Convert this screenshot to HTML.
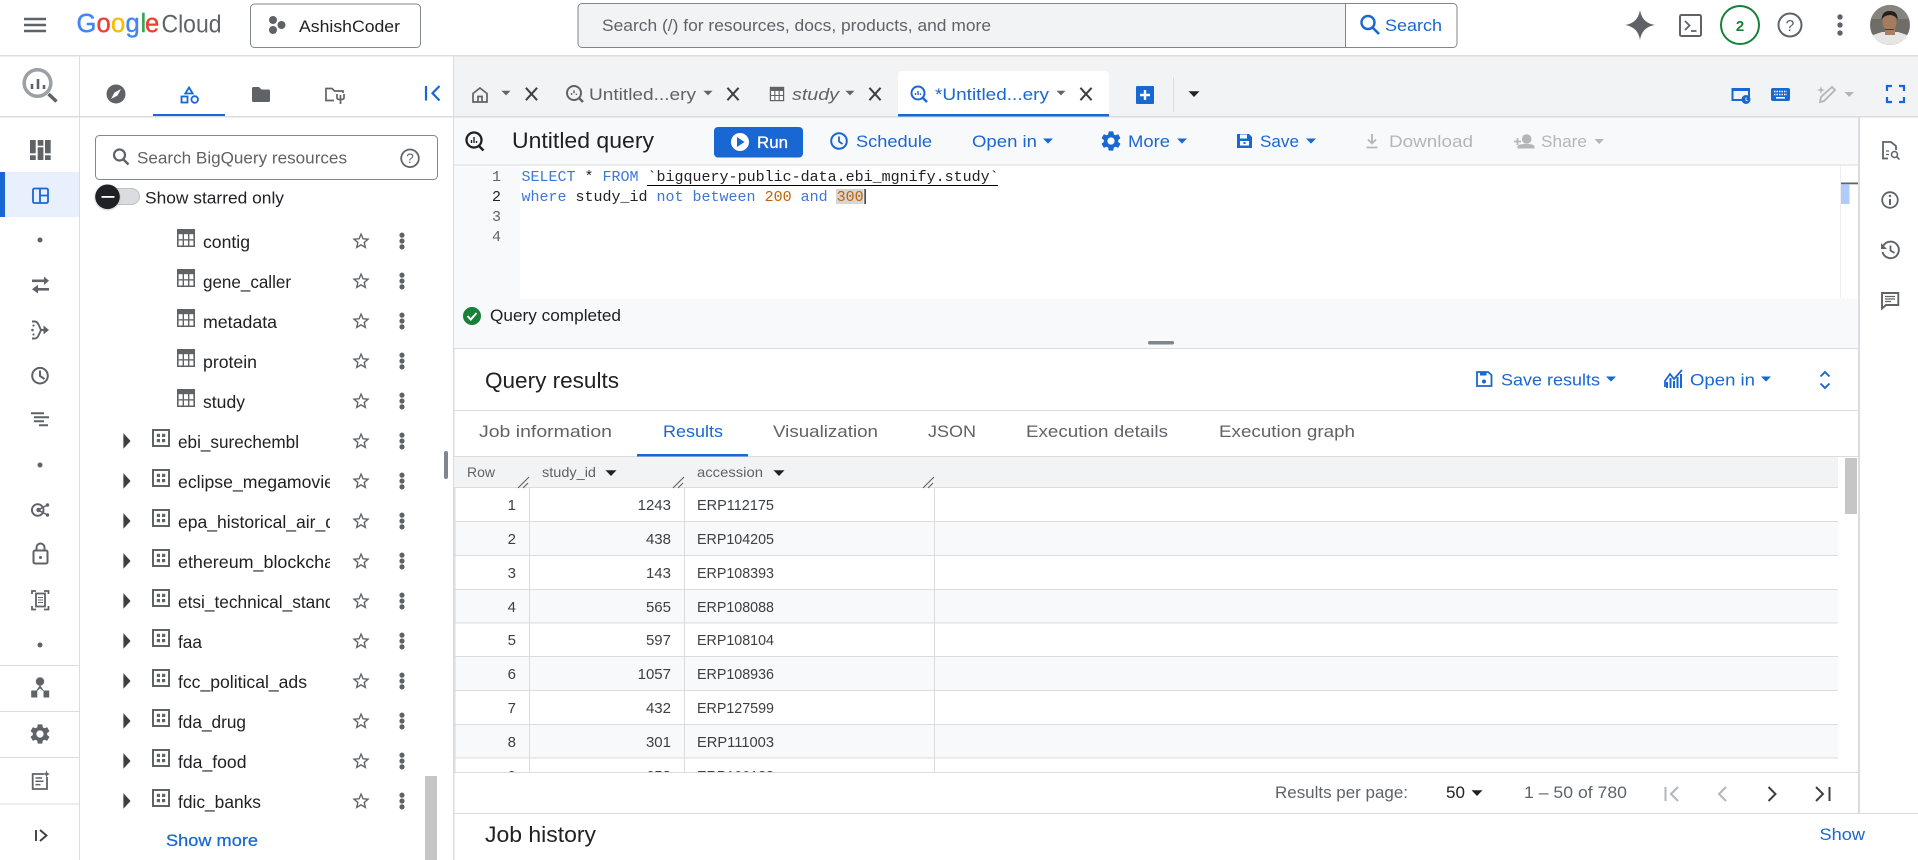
<!DOCTYPE html>
<html lang="en">
<head>
<meta charset="utf-8">
<title>BigQuery</title>
<style>
html,body{margin:0;padding:0;background:#fff;width:1918px;height:860px;overflow:hidden}
svg{display:block}
text{font-family:"Liberation Sans",Arial,sans-serif;font-size:17px;fill:#202124}
.g{fill:#5f6368}.b{fill:#1967d2}.l{fill:#b3b6ba}
.m{font-family:"Liberation Mono",monospace;font-size:15px}
.kw{fill:#3b78d8}.num{fill:#c26401}
.h{font-size:22px}
.tb{font-size:15px;fill:#3c4043}
.t{font-size:17.5px}
.med{font-weight:bold;stroke:none}
</style>
</head>
<body>
<svg xmlns="http://www.w3.org/2000/svg" width="1918" height="860" viewBox="0 0 1918 860">
<defs>
<g id="star" transform="translate(-10.4,-10.4) scale(.87)"><path fill="#5f6368" d="M22 9.24l-7.19-.62L12 2 9.19 8.63 2 9.24l5.46 4.73L5.82 21 12 17.27 18.18 21l-1.63-7.03L22 9.24zM12 15.4l-3.76 2.27 1-4.28-3.32-2.88 4.38-.38L12 6.1l1.71 4.04 4.38.38-3.32 2.88 1 4.28L12 15.4z"/></g>
<g id="dots" fill="#5f6368"><circle cx="0" cy="-5.9" r="2.6"/><circle cx="0" cy="0" r="2.6"/><circle cx="0" cy="5.9" r="2.6"/></g>
<g id="tbl"><rect x="-9" y="-9" width="18" height="18" fill="#5f6368"/><g fill="#fff"><rect x="-7.400" y="-3.800" width="4" height="5"/><rect x="-2" y="-3.800" width="4" height="5"/><rect x="3.400" y="-3.800" width="4" height="5"/><rect x="-7.400" y="2.500" width="4" height="5"/><rect x="-2" y="2.500" width="4" height="5"/><rect x="3.400" y="2.500" width="4" height="5"/></g></g>
<g id="ds"><rect x="-8" y="-8" width="16" height="16" fill="none" stroke="#5f6368" stroke-width="2"/><g fill="#5f6368"><rect x="-4.200" y="-4.200" width="3.200" height="3.200"/><rect x="1" y="-4.200" width="3.200" height="3.200"/><rect x="-4.200" y="1" width="3.200" height="3.200"/><rect x="1" y="1" width="3.200" height="3.200"/></g></g>
<path id="tri" d="M-3.600-7.700L3.600 0-3.600 7.700z" fill="#3c4043"/>
<path id="x" d="M-5.600-6.200L5.600 6.200M5.600-6.200L-5.600 6.200" stroke="#3c4043" stroke-width="2" fill="none"/>
<path id="dn" d="M-4.500-2.200H4.500L0 2.400z" fill="#5f6368"/>
<path id="dnb" d="M-5-2.500H5L0 2.600z" fill="#1967d2"/>
<path id="dnk" d="M-5.500-2.700H5.500L0 3z" fill="#202124"/>
<g id="qi"><circle cx="-1" cy="-1" r="7" fill="none" stroke="#5f6368" stroke-width="2"/><path d="M4 4L8 8" stroke="#5f6368" stroke-width="2.400"/><path d="M-3.400 1V-1M-1-.8V-3.600M1.400 1V-.4" stroke="#5f6368" stroke-width="1.400"/></g>
<g id="gear" transform="translate(-12,-12)"><path d="M19.14 12.94c.04-.3.06-.61.06-.94 0-.32-.02-.64-.07-.94l2.03-1.58c.18-.14.23-.41.12-.61l-1.92-3.32c-.12-.22-.37-.29-.59-.22l-2.39.96c-.5-.38-1.03-.7-1.62-.94l-.36-2.54c-.04-.24-.24-.41-.48-.41h-3.84c-.24 0-.43.17-.47.41l-.36 2.54c-.59.24-1.13.57-1.62.94l-2.39-.96c-.22-.08-.47 0-.59.22L2.74 8.87c-.12.21-.08.47.12.61l2.03 1.58c-.05.3-.09.63-.09.94s.02.64.07.94l-2.03 1.58c-.18.14-.23.41-.12.61l1.92 3.32c.12.22.37.29.59.22l2.39-.96c.5.38 1.03.7 1.62.94l.36 2.54c.05.24.24.41.48.41h3.84c.24 0 .44-.17.47-.41l.36-2.54c.59-.24 1.13-.56 1.62-.94l2.39.96c.22.08.47 0 .59-.22l1.92-3.32c.12-.22.07-.47-.12-.61l-2.01-1.58zM12 15.6c-1.98 0-3.6-1.62-3.6-3.6s1.62-3.6 3.6-3.6 3.6 1.62 3.6 3.6-1.62 3.6-3.6 3.6z"/></g>
<g id="res"><path d="M-5 6L6-5M0 6L5 1" stroke="#5f6368" stroke-width="1.100" fill="none"/></g>
<clipPath id="cn"><rect x="170" y="400" width="160" height="460"/></clipPath>
<clipPath id="ct"><rect x="454" y="487" width="1384" height="285"/></clipPath>
<clipPath id="ca"><circle cx="1890" cy="25" r="20"/></clipPath>
</defs>

<rect width="1918" height="860" fill="#fff"/>

<!-- Top bar -->
<rect x="0" y="55" width="1918" height="1.500" fill="#dadce0"/>
<path d="M24 19H46M24 25H46M24 31H46" stroke="#5f6368" stroke-width="2.600"/>
<text y="32" x="76.500 96.500 111 125.500 140.500 145" style="font-size:25.500px;stroke-width:.45"><tspan style="fill:#4285F4;stroke:#4285F4">G</tspan><tspan style="fill:#EA4335;stroke:#EA4335">o</tspan><tspan style="fill:#FBBC05;stroke:#FBBC05">o</tspan><tspan style="fill:#4285F4;stroke:#4285F4">g</tspan><tspan style="fill:#34A853;stroke:#34A853">l</tspan><tspan style="fill:#EA4335;stroke:#EA4335">e</tspan></text>
<text x="161.500" y="32.500" class="g" style="font-size:25px" textLength="60" lengthAdjust="spacingAndGlyphs">Cloud</text>

<rect x="250.500" y="4" width="170" height="43.500" rx="4" fill="#fff" stroke="#80868b"/>
<g fill="#5f6368"><circle cx="273" cy="20" r="4"/><circle cx="273" cy="30" r="4"/><circle cx="281.500" cy="25" r="4"/></g>
<text x="299" y="32" textLength="101" lengthAdjust="spacingAndGlyphs">AshishCoder</text>

<path d="M582 3.500H1345.500V47.500H582a4 4 0 0 1-4-4V7.500a4 4 0 0 1 4-4z" fill="#f1f3f4" stroke="#80868b"/>
<path d="M1345.500 3.500H1453a4 4 0 0 1 4 4V43.500a4 4 0 0 1-4 4H1345.500z" fill="#fff" stroke="#80868b"/>
<text x="602" y="31" class="g" textLength="389" lengthAdjust="spacingAndGlyphs">Search (/) for resources, docs, products, and more</text>
<circle cx="1368" cy="22.500" r="6.500" fill="none" stroke="#1967d2" stroke-width="2.400"/><path d="M1372.500 27.500L1379 34" stroke="#1967d2" stroke-width="2.600"/>
<text x="1385" y="31" class="b" textLength="57" lengthAdjust="spacingAndGlyphs">Search</text>

<path d="M1640 10Q1642 23 1655 25Q1642 27 1640 40Q1638 27 1625 25Q1638 23 1640 10z" fill="#5f6368"/>
<rect x="1680" y="15" width="21" height="21" rx="1.500" fill="none" stroke="#5f6368" stroke-width="2"/>
<path d="M1685 21L1689.500 25.500 1685 30M1691 31H1696.500" fill="none" stroke="#5f6368" stroke-width="1.800"/>
<circle cx="1740" cy="25" r="19" fill="#fff" stroke="#188038" stroke-width="2"/>
<text x="1740" y="31" text-anchor="middle" class="med" style="font-size:15px;fill:#188038">2</text>
<circle cx="1790" cy="25" r="11.500" fill="none" stroke="#5f6368" stroke-width="2"/>
<text x="1790" y="31" text-anchor="middle" class="g" style="font-size:16px">?</text>
<g fill="#5f6368"><circle cx="1840" cy="17" r="2.700"/><circle cx="1840" cy="25" r="2.700"/><circle cx="1840" cy="33" r="2.700"/></g>
<g clip-path="url(#ca)">
<rect x="1870" y="5" width="40" height="40" fill="#6f6d68"/>
<rect x="1870" y="5" width="40" height="14" fill="#85847e"/>
<path d="M1870 45V36L1882 32H1898L1910 36V45z" fill="#e6e6e4"/>
<rect x="1885" y="27" width="10" height="8" fill="#a87f66"/>
<ellipse cx="1889.500" cy="22" rx="7" ry="9" fill="#a67c60"/>
<path d="M1881.500 20Q1882 10.500 1890 11Q1898 11 1897.500 20Q1895 15 1890 15Q1884 15 1881.500 20z" fill="#24201e"/>
<path d="M1885 29.500H1894" stroke="#4d3a30" stroke-width="1"/>
</g>

<!-- Left rail -->
<rect x="79" y="56" width="1" height="804" fill="#dadce0"/>
<rect x="0" y="116" width="453" height="1.500" fill="#dadce0"/>
<circle cx="37.500" cy="83" r="13.300" fill="none" stroke="#9aa0a6" stroke-width="3.500"/>
<path d="M48.500 94L56.500 101.500" stroke="#5f6368" stroke-width="3.500"/>
<path d="M32 89V84M38 89V79M44 89V85" stroke="#5f6368" stroke-width="2.600"/>
<g fill="#5f6368"><rect x="30" y="140" width="5.700" height="13.300"/><rect x="30" y="155.300" width="5.700" height="4.700"/><rect x="37.700" y="140" width="5.700" height="5.700"/><rect x="37.700" y="147.300" width="5.700" height="12.700"/><rect x="45" y="140" width="5.700" height="13.300"/><rect x="45" y="155.300" width="5.700" height="4.700"/></g>
<rect x="0" y="172" width="79" height="45" fill="#e8f0fe"/>
<rect x="0" y="172" width="5" height="45" fill="#1967d2"/>
<rect x="33" y="188.500" width="15" height="14.500" rx="1.500" fill="none" stroke="#1967d2" stroke-width="1.800"/><path d="M40 188.500V203M40 195.500H48" fill="none" stroke="#1967d2" stroke-width="1.800"/>
<circle cx="40" cy="240" r="2.500" fill="#5f6368"/>
<rect x="32" y="279.500" width="13" height="2.600" fill="#5f6368"/><path d="M44 276.500L49 280.800 44 285z" fill="#5f6368"/>
<rect x="37" y="288" width="12" height="2.600" fill="#5f6368"/><path d="M38 284.800L32 289.300 38 293.500z" fill="#5f6368"/>
<g fill="#5f6368"><circle cx="32.500" cy="330" r="1.300"/><circle cx="33.500" cy="325.500" r="1.100"/><circle cx="33.500" cy="334.500" r="1.100"/></g>
<path d="M32 321.500H35Q37 321.500 38.500 324.500L41 330 38.500 335.500Q37 338.500 35 338.500H32M41 330H46" fill="none" stroke="#5f6368" stroke-width="1.900"/><path d="M43.500 325.500L49 330 43.500 334.500z" fill="#5f6368"/>
<circle cx="40" cy="375.700" r="7.800" fill="none" stroke="#5f6368" stroke-width="2"/><path d="M40 370.500V376L44.500 379" fill="none" stroke="#5f6368" stroke-width="2"/>
<path d="M31 413.200H44M34 417.200H49M34 421.200H44M39 425.200H48" stroke="#5f6368" stroke-width="2"/>
<circle cx="40" cy="465" r="2.500" fill="#5f6368"/>
<circle cx="37.700" cy="510" r="5.800" fill="none" stroke="#5f6368" stroke-width="1.900"/><circle cx="38.500" cy="510" r="2.200" fill="#5f6368"/><path d="M38 510L47.500 505M38 510L47.500 515" fill="none" stroke="#5f6368" stroke-width="1.500"/><circle cx="47.500" cy="505" r="1.700" fill="#5f6368"/><circle cx="47.500" cy="515" r="1.700" fill="#5f6368"/>
<rect x="33.500" y="550.500" width="14" height="13" rx="1.500" fill="none" stroke="#5f6368" stroke-width="2"/><path d="M36.500 550.500V547.500a4 4 0 0 1 8 0V550.500" fill="none" stroke="#5f6368" stroke-width="2"/><circle cx="40.500" cy="557.500" r="1.500" fill="#5f6368"/>
<path d="M32 594V591H36M44 591H48.500V594M32 606V609.500H36M44 609.500H48.500V606" fill="none" stroke="#5f6368" stroke-width="1.800"/><rect x="36" y="593.500" width="9" height="13" fill="none" stroke="#5f6368" stroke-width="1.800"/><path d="M38 597.500H43M38 600H43M38 602.500H43" stroke="#5f6368"/>
<circle cx="40" cy="645" r="2.500" fill="#5f6368"/>
<rect x="0" y="665" width="79" height="1" fill="#dadce0"/>
<circle cx="40" cy="681.500" r="4.200" fill="#5f6368"/><path d="M31.300 691H36L40 685 44 691H49V697H44V691.500L40 688.500 36.500 691.500V697H31.300z" fill="#5f6368"/><rect x="31.300" y="690.500" width="6" height="7" fill="#5f6368"/><rect x="43.500" y="690.500" width="5.700" height="7" fill="#5f6368"/>
<rect x="0" y="711" width="79" height="1" fill="#dadce0"/>
<use href="#gear" x="40" y="734" fill="#5f6368"/>
<rect x="0" y="757" width="79" height="1" fill="#dadce0"/>
<path d="M44 774H32.700V789H47V777" fill="none" stroke="#5f6368" stroke-width="1.800"/><path d="M35.500 778H42M35.500 781.300H43.500M35.500 784.600H40.500" stroke="#5f6368" stroke-width="1.500"/><path d="M46.500 770.500L47.500 773 50 774 47.500 775 46.500 777.500 45.500 775 43 774 45.500 773z" fill="#5f6368"/>
<rect x="0" y="803.500" width="79" height="1" fill="#dadce0"/>
<path d="M36 830V841" stroke="#3c4043" stroke-width="1.900"/><path d="M40 830L46.500 835.500 40 841" fill="none" stroke="#3c4043" stroke-width="1.900"/>

<!-- Left panel header -->
<circle cx="116" cy="94" r="9.500" fill="#5f6368"/><path d="M121 89L117.500 95.500 111 99 114.500 92.500z" fill="#fff"/>
<path d="M189 87.500L192.700 93.500H185.300z" fill="none" stroke="#1967d2" stroke-width="1.800"/><rect x="181.500" y="96.500" width="6" height="6" fill="none" stroke="#1967d2" stroke-width="1.800"/><circle cx="194.700" cy="99.500" r="3.300" fill="none" stroke="#1967d2" stroke-width="1.800"/>
<rect x="153" y="114" width="72" height="2" fill="#1967d2"/>
<path d="M253.500 87H259L261.500 89.500H268.500a1.500 1.500 0 0 1 1.500 1.500V100.500a1.500 1.500 0 0 1-1.500 1.500H253.500a1.500 1.500 0 0 1-1.500-1.500V88.500a1.500 1.500 0 0 1 1.500-1.500z" fill="#5f6368"/>
<path d="M334 100.500H326V88.500H332L334.500 91H343V93" fill="none" stroke="#5f6368" stroke-width="1.700"/><path d="M337 94V98M344 94V98M337 98Q337 99.500 340.500 99.500Q344 99.500 344 98M340.500 95V104" fill="none" stroke="#5f6368" stroke-width="1.700"/>
<path d="M426 86V100.500M439.500 86L432.500 93.200 439.500 100.500" fill="none" stroke="#1967d2" stroke-width="2.200"/>

<rect x="95.500" y="135.500" width="342" height="44" rx="4" fill="#fff" stroke="#80868b"/>
<circle cx="119.500" cy="155" r="5.500" fill="none" stroke="#5f6368" stroke-width="2.200"/><path d="M123.500 159.500L128.500 164.500" stroke="#5f6368" stroke-width="2.400"/>
<text x="137" y="163.500" class="g" textLength="210" lengthAdjust="spacingAndGlyphs">Search BigQuery resources</text>
<circle cx="410" cy="158.300" r="8.800" fill="none" stroke="#5f6368" stroke-width="1.800"/><text x="410" y="163" text-anchor="middle" class="g" style="font-size:13.500px">?</text>

<rect x="100" y="188.500" width="39.500" height="16" rx="8" fill="#dadce0" stroke="#bdc1c6"/>
<circle cx="107.500" cy="197.500" r="13.500" fill="#bbb" opacity=".35"/>
<circle cx="107.500" cy="196.800" r="12.300" fill="#202124"/>
<rect x="101.500" y="196" width="13" height="1.800" fill="#fff"/>
<text x="145" y="203.500" textLength="139" lengthAdjust="spacingAndGlyphs">Show starred only</text>

<!-- Tree -->
<use href="#tbl" x="186" y="238"/><text x="203" y="248" class="t" textLength="47" lengthAdjust="spacingAndGlyphs">contig</text><use href="#star" x="361" y="241"/><use href="#dots" x="402" y="241"/>
<use href="#tbl" x="186" y="278"/><text x="203" y="288" class="t" textLength="88" lengthAdjust="spacingAndGlyphs">gene_caller</text><use href="#star" x="361" y="281"/><use href="#dots" x="402" y="281"/>
<use href="#tbl" x="186" y="318"/><text x="203" y="328" class="t" textLength="74" lengthAdjust="spacingAndGlyphs">metadata</text><use href="#star" x="361" y="321"/><use href="#dots" x="402" y="321"/>
<use href="#tbl" x="186" y="358"/><text x="203" y="368" class="t" textLength="54" lengthAdjust="spacingAndGlyphs">protein</text><use href="#star" x="361" y="361"/><use href="#dots" x="402" y="361"/>
<use href="#tbl" x="186" y="398"/><text x="203" y="408" class="t" textLength="42" lengthAdjust="spacingAndGlyphs">study</text><use href="#star" x="361" y="401"/><use href="#dots" x="402" y="401"/>

<use href="#tri" x="127" y="441"/><use href="#ds" x="161" y="438"/><text x="178" y="448" class="t" textLength="121" lengthAdjust="spacingAndGlyphs">ebi_surechembl</text><use href="#star" x="361" y="441"/><use href="#dots" x="402" y="441"/>
<use href="#tri" x="127" y="481"/><use href="#ds" x="161" y="478"/><text x="178" y="488" class="t" clip-path="url(#cn)" textLength="156" lengthAdjust="spacingAndGlyphs">eclipse_megamovie</text><use href="#star" x="361" y="481"/><use href="#dots" x="402" y="481"/>
<use href="#tri" x="127" y="521"/><use href="#ds" x="161" y="518"/><text x="178" y="528" class="t" clip-path="url(#cn)" textLength="198" lengthAdjust="spacingAndGlyphs">epa_historical_air_quality</text><use href="#star" x="361" y="521"/><use href="#dots" x="402" y="521"/>
<use href="#tri" x="127" y="561"/><use href="#ds" x="161" y="558"/><text x="178" y="568" class="t" clip-path="url(#cn)" textLength="170" lengthAdjust="spacingAndGlyphs">ethereum_blockchain</text><use href="#star" x="361" y="561"/><use href="#dots" x="402" y="561"/>
<use href="#tri" x="127" y="601"/><use href="#ds" x="161" y="598"/><text x="178" y="608" class="t" clip-path="url(#cn)" textLength="190" lengthAdjust="spacingAndGlyphs">etsi_technical_standards</text><use href="#star" x="361" y="601"/><use href="#dots" x="402" y="601"/>
<use href="#tri" x="127" y="641"/><use href="#ds" x="161" y="638"/><text x="178" y="648" class="t" textLength="24" lengthAdjust="spacingAndGlyphs">faa</text><use href="#star" x="361" y="641"/><use href="#dots" x="402" y="641"/>
<use href="#tri" x="127" y="681"/><use href="#ds" x="161" y="678"/><text x="178" y="688" class="t" textLength="129" lengthAdjust="spacingAndGlyphs">fcc_political_ads</text><use href="#star" x="361" y="681"/><use href="#dots" x="402" y="681"/>
<use href="#tri" x="127" y="721"/><use href="#ds" x="161" y="718"/><text x="178" y="728" class="t" textLength="68" lengthAdjust="spacingAndGlyphs">fda_drug</text><use href="#star" x="361" y="721"/><use href="#dots" x="402" y="721"/>
<use href="#tri" x="127" y="761"/><use href="#ds" x="161" y="758"/><text x="178" y="768" class="t" textLength="68.500" lengthAdjust="spacingAndGlyphs">fda_food</text><use href="#star" x="361" y="761"/><use href="#dots" x="402" y="761"/>
<use href="#tri" x="127" y="801"/><use href="#ds" x="161" y="798"/><text x="178" y="808" class="t" textLength="83" lengthAdjust="spacingAndGlyphs">fdic_banks</text><use href="#star" x="361" y="801"/><use href="#dots" x="402" y="801"/>
<text x="166" y="846" class="b" style="stroke:#1967d2;stroke-width:.25" textLength="92" lengthAdjust="spacingAndGlyphs">Show more</text>
<rect x="425" y="776" width="12" height="84" fill="#c6c6c6"/>
<rect x="444" y="451" width="4" height="28" rx="2" fill="#80868b"/>
<rect x="453" y="56" width="1.500" height="804" fill="#dadce0"/>

<!-- Tab bar -->
<rect x="454" y="56.500" width="1464" height="60" fill="#f1f3f4"/>
<rect x="454" y="116" width="1464" height="1.500" fill="#dadce0"/>
<path d="M480 88L487 93.500V102H473V93.500zM478 102V96.500H482V102" fill="none" stroke="#5f6368" stroke-width="1.700"/>
<use href="#dn" x="506" y="93"/><use href="#x" x="531.500" y="94"/>
<use href="#qi" x="575" y="94"/><text x="589" y="100" class="g" textLength="107" lengthAdjust="spacingAndGlyphs">Untitled...ery</text><use href="#dn" x="708" y="93"/><use href="#x" x="733" y="94"/>
<g transform="translate(777 94) scale(.8)"><use href="#tbl"/></g><text x="792" y="100" class="g" style="font-style:italic" textLength="47" lengthAdjust="spacingAndGlyphs">study</text><use href="#dn" x="850" y="93"/><use href="#x" x="875" y="94"/>
<path d="M898 116V75a4 4 0 0 1 4-4H1105a4 4 0 0 1 4 4V116z" fill="#fff"/>
<rect x="898" y="114" width="211" height="2.500" fill="#1967d2"/>
<circle cx="918" cy="93" r="6.500" fill="none" stroke="#1967d2" stroke-width="2"/><path d="M923 98L927 102" stroke="#1967d2" stroke-width="2.400"/><path d="M915.500 95V93M918 95V91M920.500 95V93.500" stroke="#1967d2" stroke-width="1.400"/>
<text x="935" y="100" class="b" textLength="114" lengthAdjust="spacingAndGlyphs">*Untitled...ery</text><use href="#dn" x="1061" y="93"/><use href="#x" x="1086" y="94"/>
<rect x="1136" y="86" width="18" height="18" rx="1" fill="#1967d2"/><path d="M1145 90V100M1140 95H1150" stroke="#fff" stroke-width="2.400"/>
<rect x="1173" y="77" width="1" height="35" fill="#dadce0"/>
<use href="#dnk" x="1194" y="94"/>

<path d="M1749 97V89H1732.500V100H1745" fill="none" stroke="#1967d2" stroke-width="2"/><rect x="1732" y="88" width="17" height="3" fill="#1967d2"/><circle cx="1746" cy="99.500" r="4.500" fill="#1967d2"/><path d="M1746 97.500V100L1747.500 101" stroke="#fff"/>
<rect x="1771" y="88" width="19" height="13" rx="2" fill="#1967d2"/><path d="M1774 91.500H1787M1774 94.500H1787" stroke="#fff" stroke-width="1.500" stroke-dasharray="1.500 1"/><rect x="1776" y="97" width="9" height="1.600" fill="#fff"/>
<path d="M1820 102L1821 97 1832 87 1835 90 1824 101z" fill="none" stroke="#b3b6ba" stroke-width="1.800"/><path d="M1821 86L1822 89 1825 90 1822 91 1821 94 1820 91 1817 90 1820 89z" fill="#b3b6ba"/>
<path d="M1844.500 92H1854L1849.200 97z" fill="#b3b6ba"/>
<path d="M1887 91V86H1892M1899 86H1904V91M1904 97V102H1899M1892 102H1887V97" fill="none" stroke="#1967d2" stroke-width="2.200"/>

<!-- Toolbar -->
<rect x="454" y="117.500" width="1405" height="47.500" fill="#f8f9fa"/>
<rect x="454" y="164.500" width="1405" height="1" fill="#dadce0"/>
<circle cx="474" cy="140" r="7.500" fill="none" stroke="#202124" stroke-width="2.300"/><path d="M479 146L483.500 150.500" stroke="#202124" stroke-width="2.500"/><path d="M471.500 143V140M474 143V137M476.500 143V141" stroke="#202124" stroke-width="1.400"/>
<text x="512" y="148" style="font-size:22px" textLength="142" lengthAdjust="spacingAndGlyphs">Untitled query</text>
<rect x="714" y="127" width="89" height="30.500" rx="4" fill="#1967d2"/>
<circle cx="740" cy="142" r="9" fill="#fff"/><path d="M737 137L744.500 142 737 147z" fill="#1967d2"/>
<text x="757" y="148" style="font-size:16.500px;fill:#fff;stroke:#fff;stroke-width:.3" textLength="31" lengthAdjust="spacingAndGlyphs">Run</text>
<circle cx="839" cy="141" r="7.800" fill="none" stroke="#1967d2" stroke-width="2"/><path d="M839 136.500V141.500L842.500 144" fill="none" stroke="#1967d2" stroke-width="1.800"/>
<text x="856" y="147" class="b" textLength="76" lengthAdjust="spacingAndGlyphs">Schedule</text>
<text x="972" y="147" class="b" textLength="65" lengthAdjust="spacingAndGlyphs">Open in</text><use href="#dnb" x="1048" y="141"/>
<use href="#gear" x="1111" y="141" fill="#1967d2"/>
<text x="1128" y="147" class="b" textLength="42" lengthAdjust="spacingAndGlyphs">More</text><use href="#dnb" x="1182" y="141"/>
<path d="M1237 134H1249L1252 137V148H1237z" fill="#1967d2"/><rect x="1240" y="134.500" width="7" height="4" fill="#fff"/><rect x="1240" y="141" width="9" height="4.500" fill="#fff"/><rect x="1243.500" y="142" width="2" height="2" fill="#1967d2"/>
<text x="1260" y="147" class="b" textLength="39" lengthAdjust="spacingAndGlyphs">Save</text><use href="#dnb" x="1311" y="141"/>
<path d="M1372 134V143M1368 139.500L1372 143.500 1376 139.500M1366.500 147.500H1377.500" fill="none" stroke="#b3b6ba" stroke-width="1.800"/>
<text x="1389" y="147" class="l" textLength="84" lengthAdjust="spacingAndGlyphs">Download</text>
<circle cx="1526.700" cy="139" r="4.800" fill="#b3b6ba"/><path d="M1517.500 148.500V146.500Q1517.500 144 1526.700 144Q1534.500 144 1534.500 146.500V148.500z" fill="#b3b6ba"/><path d="M1514 141.500H1521M1517.500 138V145" stroke="#b3b6ba" stroke-width="1.800"/>
<text x="1541" y="147" class="l" textLength="46" lengthAdjust="spacingAndGlyphs">Share</text><path d="M1594.500 139H1604L1599.200 144z" fill="#b3b6ba"/>

<!-- Editor -->
<rect x="454" y="165.500" width="66" height="133" fill="#f8f9fa"/>
<rect x="520" y="165.500" width="1338" height="133" fill="#fff"/>
<text x="496.500" y="181" text-anchor="middle" class="m g">1</text>
<text x="496.500" y="201" text-anchor="middle" class="m">2</text>
<text x="496.500" y="221" text-anchor="middle" class="m g">3</text>
<text x="496.500" y="241" text-anchor="middle" class="m g">4</text>
<text x="521.500" y="181" class="m" xml:space="preserve"><tspan class="m kw">SELECT</tspan><tspan class="m"> * </tspan><tspan class="m kw">FROM</tspan><tspan class="m"> `bigquery-public-data.ebi_mgnify.study`</tspan></text>
<rect x="647" y="185" width="351" height="1" fill="#000"/>
<rect x="836" y="189" width="27.500" height="15" fill="#d6d6d6"/>
<text x="521.500" y="201" class="m" xml:space="preserve"><tspan class="m kw">where</tspan><tspan class="m"> study_id </tspan><tspan class="m kw">not between</tspan><tspan class="m"> </tspan><tspan class="m num">200</tspan><tspan class="m"> </tspan><tspan class="m kw">and</tspan><tspan class="m"> </tspan><tspan class="m num">300</tspan></text>
<rect x="864.500" y="189" width="1.200" height="15" fill="#000"/>
<rect x="1840" y="165.500" width="1" height="133" fill="#eceef0"/>
<rect x="1841" y="182.500" width="17" height="1.800" fill="#5f6368"/>
<rect x="1841" y="184.300" width="8.500" height="19.700" fill="#aecbfa"/>

<!-- Status -->
<rect x="454" y="298.500" width="1405" height="50" fill="#f8f9fa"/>
<rect x="454" y="348" width="1405" height="1" fill="#dadce0"/>
<circle cx="472" cy="316" r="9" fill="#188038"/><path d="M467.500 316L470.800 319.500 476.500 313" fill="none" stroke="#fff" stroke-width="2"/>
<text x="490" y="321" textLength="131" lengthAdjust="spacingAndGlyphs">Query completed</text>
<rect x="1148" y="341" width="26" height="3.500" rx="1.500" fill="#80868b"/>

<!-- Query results -->
<text x="485" y="388" class="h" textLength="134" lengthAdjust="spacingAndGlyphs">Query results</text>
<rect x="454" y="410" width="1404" height="1" fill="#dadce0"/>
<path d="M1477 372H1488L1491.500 375V386H1477z" fill="none" stroke="#1967d2" stroke-width="1.800"/><rect x="1480" y="372.500" width="6.500" height="3" fill="#1967d2"/><circle cx="1484" cy="381.500" r="2" fill="#1967d2"/>
<text x="1501" y="385.500" class="b" textLength="99" lengthAdjust="spacingAndGlyphs">Save results</text><use href="#dnb" x="1611" y="379"/>
<path d="M1665 387V381L1670 374 1674 379 1682 370" fill="none" stroke="#1967d2" stroke-width="1.800"/><path d="M1667 388V382M1670.500 388V378M1674 388V381M1677.500 388V377M1681 388V374" stroke="#1967d2" stroke-width="2"/>
<text x="1690" y="385.500" class="b" textLength="65" lengthAdjust="spacingAndGlyphs">Open in</text><use href="#dnb" x="1766" y="379"/>
<path d="M1820.500 376.500L1825 372 1829.500 376.500M1820.500 383.500L1825 388 1829.500 383.500" fill="none" stroke="#1967d2" stroke-width="1.900"/>

<!-- Tabs -->
<text x="479" y="437" class="g" style="font-size:16.500px" textLength="133" lengthAdjust="spacingAndGlyphs">Job information</text>
<text x="663" y="437" class="b" style="font-size:16.500px" textLength="60" lengthAdjust="spacingAndGlyphs">Results</text>
<text x="773" y="437" class="g" style="font-size:16.500px" textLength="105" lengthAdjust="spacingAndGlyphs">Visualization</text>
<text x="928" y="437" class="g" style="font-size:16.500px" textLength="48" lengthAdjust="spacingAndGlyphs">JSON</text>
<text x="1026" y="437" class="g" style="font-size:16.500px" textLength="142" lengthAdjust="spacingAndGlyphs">Execution details</text>
<text x="1219" y="437" class="g" style="font-size:16.500px" textLength="136" lengthAdjust="spacingAndGlyphs">Execution graph</text>
<rect x="454" y="456" width="1404" height="1" fill="#dadce0"/>
<rect x="637" y="454" width="111" height="2.500" fill="#1967d2"/>

<!-- Table header -->
<rect x="454" y="457" width="1384" height="30" fill="#f1f3f4"/>
<rect x="454" y="487" width="1384" height="1" fill="#dadce0"/>
<text x="467" y="477" class="g" style="font-size:14px" textLength="28" lengthAdjust="spacingAndGlyphs">Row</text>
<use href="#res" x="523" y="482"/>
<text x="542" y="477" class="g" style="font-size:14px" textLength="54" lengthAdjust="spacingAndGlyphs">study_id</text><use href="#dnk" x="611" y="473"/>
<use href="#res" x="678" y="482"/>
<text x="697" y="477" class="g" style="font-size:14px" textLength="66" lengthAdjust="spacingAndGlyphs">accession</text><use href="#dnk" x="779" y="473"/>
<use href="#res" x="928" y="482"/>

<!-- Table body -->
<g clip-path="url(#ct)">
<rect x="454" y="521.700" width="1384" height="33.800" fill="#f8f9fa"/>
<rect x="454" y="589" width="1384" height="33.800" fill="#f8f9fa"/>
<rect x="454" y="656.500" width="1384" height="33.800" fill="#f8f9fa"/>
<rect x="454" y="724" width="1384" height="33.800" fill="#f8f9fa"/>
<g fill="#dadce0">
<rect x="454" y="521" width="1384" height="1"/><rect x="454" y="555" width="1384" height="1"/><rect x="454" y="589" width="1384" height="1"/><rect x="454" y="622.500" width="1384" height="1"/><rect x="454" y="656" width="1384" height="1"/><rect x="454" y="690" width="1384" height="1"/><rect x="454" y="724" width="1384" height="1"/><rect x="454" y="757.500" width="1384" height="1"/>
<rect x="454" y="487" width="1.500" height="285"/><rect x="529" y="487" width="1" height="285"/><rect x="684" y="487" width="1" height="285"/><rect x="934" y="487" width="1" height="285"/>
</g>
<text x="516" y="510" text-anchor="end" class="tb">1</text><text x="671" y="510" text-anchor="end" class="tb">1243</text><text x="697" y="510" class="tb" textLength="77" lengthAdjust="spacingAndGlyphs">ERP112175</text>
<text x="516" y="544" text-anchor="end" class="tb">2</text><text x="671" y="544" text-anchor="end" class="tb">438</text><text x="697" y="544" class="tb" textLength="77" lengthAdjust="spacingAndGlyphs">ERP104205</text>
<text x="516" y="578" text-anchor="end" class="tb">3</text><text x="671" y="578" text-anchor="end" class="tb">143</text><text x="697" y="578" class="tb" textLength="77" lengthAdjust="spacingAndGlyphs">ERP108393</text>
<text x="516" y="612" text-anchor="end" class="tb">4</text><text x="671" y="612" text-anchor="end" class="tb">565</text><text x="697" y="612" class="tb" textLength="77" lengthAdjust="spacingAndGlyphs">ERP108088</text>
<text x="516" y="645" text-anchor="end" class="tb">5</text><text x="671" y="645" text-anchor="end" class="tb">597</text><text x="697" y="645" class="tb" textLength="77" lengthAdjust="spacingAndGlyphs">ERP108104</text>
<text x="516" y="679" text-anchor="end" class="tb">6</text><text x="671" y="679" text-anchor="end" class="tb">1057</text><text x="697" y="679" class="tb" textLength="77" lengthAdjust="spacingAndGlyphs">ERP108936</text>
<text x="516" y="713" text-anchor="end" class="tb">7</text><text x="671" y="713" text-anchor="end" class="tb">432</text><text x="697" y="713" class="tb" textLength="77" lengthAdjust="spacingAndGlyphs">ERP127599</text>
<text x="516" y="747" text-anchor="end" class="tb">8</text><text x="671" y="747" text-anchor="end" class="tb">301</text><text x="697" y="747" class="tb" textLength="77" lengthAdjust="spacingAndGlyphs">ERP111003</text>
<text x="516" y="781" text-anchor="end" class="tb">9</text><text x="671" y="781" text-anchor="end" class="tb">653</text><text x="697" y="781" class="tb" textLength="77" lengthAdjust="spacingAndGlyphs">ERP100183</text>
</g>
<rect x="1845" y="458" width="12" height="56" fill="#c6c6c6"/>

<!-- Pagination -->
<rect x="454" y="772" width="1404" height="1" fill="#dadce0"/>
<text x="1275" y="798" class="g" textLength="133" lengthAdjust="spacingAndGlyphs">Results per page:</text>
<text x="1446" y="798" textLength="19" lengthAdjust="spacingAndGlyphs">50</text><use href="#dnk" x="1477" y="793"/>
<text x="1524" y="798" class="g" textLength="103" lengthAdjust="spacingAndGlyphs">1 – 50 of 780</text>
<path d="M1665.500 787V801M1678 787L1671 794 1678 801" fill="none" stroke="#b3b6ba" stroke-width="2"/>
<path d="M1726 787L1719 794 1726 801" fill="none" stroke="#b3b6ba" stroke-width="2"/>
<path d="M1768.500 787L1775.500 794 1768.500 801" fill="none" stroke="#3c4043" stroke-width="2"/>
<path d="M1816 787L1823 794 1816 801M1829.500 787V801" fill="none" stroke="#3c4043" stroke-width="2"/>

<!-- Job history -->
<rect x="454" y="813" width="1464" height="1" fill="#dadce0"/>
<text x="485" y="842" class="h" textLength="111" lengthAdjust="spacingAndGlyphs">Job history</text>
<text x="1819.500" y="840" class="b" textLength="45.500" lengthAdjust="spacingAndGlyphs">Show</text>

<!-- Right panel -->
<rect x="1858" y="117" width="2" height="696" fill="#dadce0"/>
<path d="M1896 150V146L1891 142H1883V158.500H1888" fill="none" stroke="#5f6368" stroke-width="1.800"/><path d="M1886 151H1889M1886 154.500H1889" stroke="#5f6368" stroke-width="1.300"/><circle cx="1894.500" cy="154.500" r="3" fill="none" stroke="#5f6368" stroke-width="1.500"/><path d="M1896.800 156.800L1899.500 159.500" stroke="#5f6368" stroke-width="1.600"/>
<circle cx="1890" cy="200" r="7.800" fill="none" stroke="#5f6368" stroke-width="1.800"/><path d="M1890 199V205" stroke="#5f6368" stroke-width="2"/><circle cx="1890" cy="196" r="1.200" fill="#5f6368"/>
<path d="M1883.500 245.500A8.300 8.300 0 1 1 1882.500 252" fill="none" stroke="#5f6368" stroke-width="1.900"/><path d="M1881 243V249H1887z" fill="#5f6368"/><path d="M1890.500 245.500V250.500L1894.500 253" fill="none" stroke="#5f6368" stroke-width="1.800"/>
<path d="M1882 293H1898.300V305H1886L1882 308.500z" fill="none" stroke="#5f6368" stroke-width="1.900"/><path d="M1885 296.500H1895M1885 299H1895M1885 301.500H1891" stroke="#5f6368" stroke-width="1.200"/>
</svg>
</body>
</html>
